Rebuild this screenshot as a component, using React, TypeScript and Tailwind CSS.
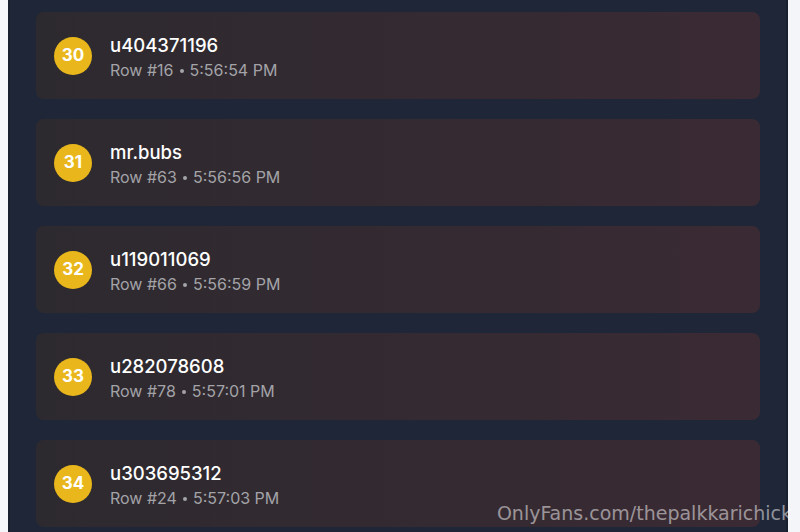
const rows = [
  { rank: 30, name: "u404371196", row: 16, time: "5:56:54 PM" },
  { rank: 31, name: "mr.bubs", row: 63, time: "5:56:56 PM" },
  { rank: 32, name: "u119011069", row: 66, time: "5:56:59 PM" },
  { rank: 33, name: "u282078608", row: 78, time: "5:57:01 PM" },
  { rank: 34, name: "u303695312", row: 24, time: "5:57:03 PM" },
];

const App = () => {
  return (
    <div className="relative h-[532px] w-[800px] overflow-hidden bg-[#f4f5f9] pl-[8px] pr-[12px] font-['Inter',sans-serif]">
      <div className="h-full border-x-2 border-[#182030] bg-[#1f2637] px-[26px] pt-[12px]">
        <div className="flex flex-col gap-[20px]">
          {rows.map((r) => (
            <div
              key={r.rank}
              className="flex h-[87px] items-center gap-[18px] rounded-[8px] bg-gradient-to-r from-[#2d2a2f] to-[#3a2a33] pl-[18px]"
            >
              <div className="flex h-[38px] w-[38px] items-center justify-center rounded-full bg-[#e9b71b] text-[17px] font-bold text-white">
                {r.rank}
              </div>
              <div className="flex flex-col gap-[2px] pt-[3px]">
                <p className="text-[18.5px] leading-[24px] font-medium text-white">
                  {r.name}
                </p>
                <p className="flex items-center text-[16px] leading-[22px] text-[#a3a3a8]">
                  Row #{r.row}
                  <span className="mx-[6px] mt-[1px] h-[4px] w-[4px] rounded-full bg-[#a3a3a8]" />
                  {r.time}
                </p>
              </div>
            </div>
          ))}
        </div>
      </div>
      <p className="absolute right-[8px] bottom-[5px] font-['DejaVu_Sans',sans-serif] text-[19px] text-white/50">
        OnlyFans.com/thepalkkarichick
      </p>
    </div>
  );
};

export default App;
